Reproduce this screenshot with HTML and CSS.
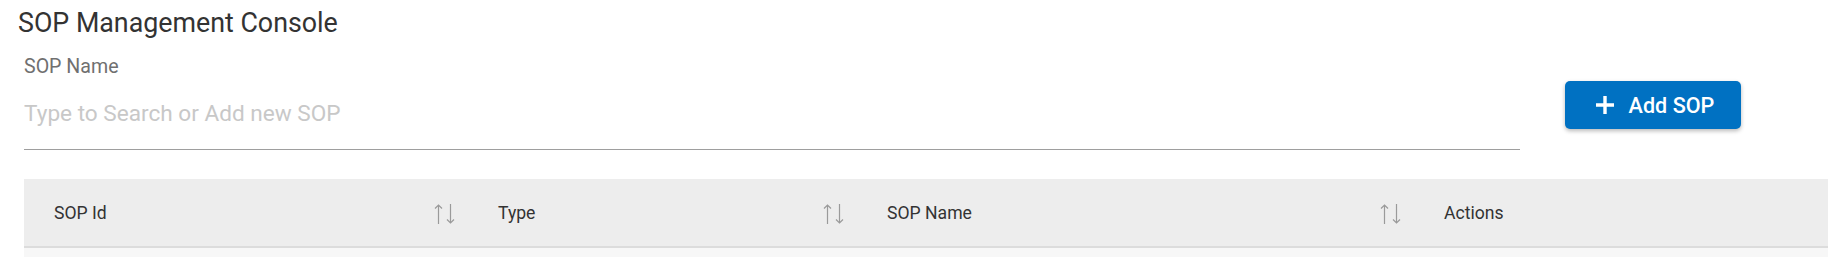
FILE: index.html
```html
<!DOCTYPE html>
<html lang="en">
<head>
<meta charset="utf-8">
<title>SOP Management Console</title>
<link rel="stylesheet" href="styles.css">
</head>
<body>
<main class="page">
  <h1 class="title">SOP Management Console</h1>
  <div class="form-row">
    <div class="field">
      <label class="field-label" for="sop-name">SOP Name</label>
      <input id="sop-name" class="field-input" type="text" placeholder="Type to Search or Add new SOP">
    </div>
    <button class="add-btn" type="button">
      <svg class="add-icon" viewBox="0 0 20 20" aria-hidden="true"><path d="M10 1v18M1 10h18" stroke="#fff" stroke-width="3.4" fill="none"/></svg>
      <span>Add SOP</span>
    </button>
  </div>
  <div class="table">
    <div class="thead">
      <div class="th col-id"><span>SOP Id</span><svg class="sort" viewBox="0 0 21 20" aria-hidden="true"><path d="M4.5 1v19M1 4.5 4.5 1 8 4.5M16.5 0v19M13 15.5l3.5 3.5 3.5-3.5" stroke="#9a9a9a" stroke-width="1.2" fill="none"/></svg></div>
      <div class="th col-type"><span>Type</span><svg class="sort" viewBox="0 0 21 20" aria-hidden="true"><path d="M4.5 1v19M1 4.5 4.5 1 8 4.5M16.5 0v19M13 15.5l3.5 3.5 3.5-3.5" stroke="#9a9a9a" stroke-width="1.2" fill="none"/></svg></div>
      <div class="th col-name"><span>SOP Name</span><svg class="sort" viewBox="0 0 21 20" aria-hidden="true"><path d="M4.5 1v19M1 4.5 4.5 1 8 4.5M16.5 0v19M13 15.5l3.5 3.5 3.5-3.5" stroke="#9a9a9a" stroke-width="1.2" fill="none"/></svg></div>
      <div class="th col-actions"><span>Actions</span></div>
    </div>
    <div class="tbody">
      <div class="row"></div>
    </div>
  </div>
</main>
</body>
</html>
```

FILE: styles.css
```css
* { box-sizing: border-box; }

html, body {
  margin: 0;
  padding: 0;
  background: #ffffff;
  font-family: Roboto, "Liberation Sans", Arial, sans-serif;
}

.page {
  padding: 8px 4px 0 24px;
}

.title {
  margin: 0 0 0 -6px;
  font-size: 26.8px;
  line-height: 31px;
  font-weight: 400;
  color: #333333;
}

.form-row {
  display: flex;
  align-items: flex-start;
  margin-top: 17px;
}

.field {
  display: flex;
  flex-direction: column;
  flex: 0 0 1496px;
}

.field-label {
  font-size: 19.6px;
  line-height: 22px;
  color: #707070;
}

.field-input {
  width: 100%;
  height: 72px;
  padding: 0;
  margin: 0;
  border: 0;
  border-bottom: 1px solid #9e9e9e;
  outline: none;
  font-family: inherit;
  font-size: 22.6px;
  color: #333333;
  background: transparent;
}

.field-input::placeholder {
  color: #c8c8c8;
  opacity: 1;
}

.add-btn {
  flex: 0 0 176px;
  display: flex;
  align-items: center;
  justify-content: center;
  gap: 14px;
  height: 48px;
  margin: 25px 0 0 45px;
  padding: 0 0 0 3px;
  border: 0;
  border-radius: 5px;
  background: #0071c2;
  color: #ffffff;
  font-family: inherit;
  font-size: 21.6px;
  font-weight: 500;
  box-shadow: 0 2px 4px rgba(0, 0, 0, 0.28);
  cursor: pointer;
}

.add-icon {
  width: 20px;
  height: 20px;
}

.table {
  margin-top: 29px;
}

.thead {
  display: grid;
  grid-template-columns: 444px 389px 557px 1fr;
  height: 69px;
  background: #ededed;
  border-bottom: 2px solid #dcdcdc;
}

.th {
  display: flex;
  align-items: center;
  justify-content: space-between;
  padding: 0 13px 0 30px;
  font-size: 17.6px;
  color: #333333;
}

.sort {
  width: 21px;
  height: 20px;
  margin-top: 2px;
}

.row {
  height: 40px;
  background: #f7f7f7;
}
```
